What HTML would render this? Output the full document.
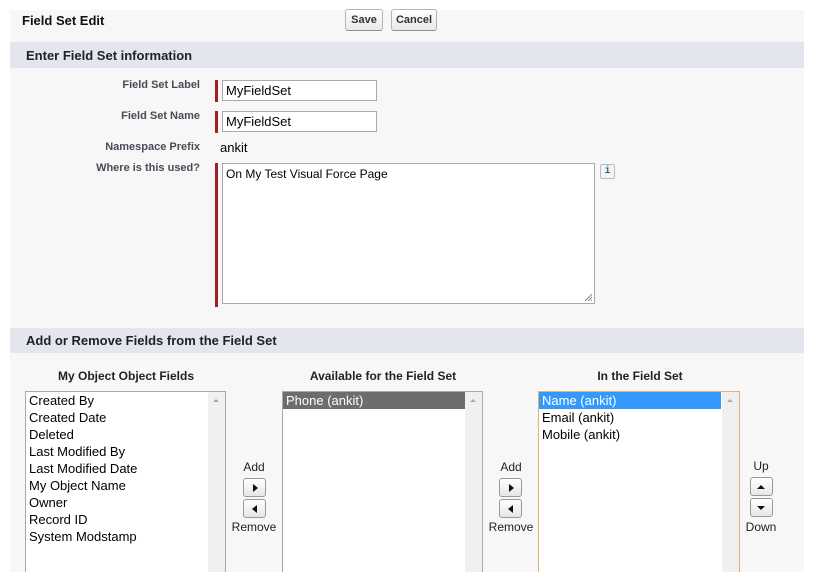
<!DOCTYPE html>
<html style="width:814px;height:572px;overflow:hidden"><head><style>
*{margin:0;padding:0;box-sizing:border-box}
body{width:814px;height:572px;background:#fff;font-family:"Liberation Sans",Arial,sans-serif;position:relative;overflow:hidden;color:#000}
.a{position:absolute}
.bg{left:10px;top:10px;width:794px;height:562px;background:#f7f7f7}
.hdr{left:10px;width:794px;height:25px;background:#e3e6ee;font-weight:bold;font-size:13px;color:#222;padding-left:16px;line-height:25px}
.btn{border:1px solid #b5b5b5;border-bottom-color:#8f8f8f;border-radius:3px;background:linear-gradient(#fff,#e8e8e8);font-size:11px;font-weight:bold;color:#333;text-align:center;line-height:20px;height:22px}
.lbl{font-size:11px;font-weight:bold;color:#4a4a56;text-align:right;width:190px;left:10px}
.red{background:#a31e22;width:3px;left:215px}
.inp{border:1px solid #aaa;background:#fff;font-size:13px;padding-left:3px;line-height:19px}
.ch{font-size:12px;font-weight:bold;color:#222;text-align:center;width:220px}
.list{border:1px solid #a9a9a9;border-bottom:0;background:#fff;height:181px;font-size:13px;line-height:17px}
.list .sb{position:absolute;right:0;top:0;width:17px;height:100%;background:#f0f0f0}
.list .sb:after{content:"";position:absolute;left:5px;top:7px;border:3px solid transparent;border-bottom:3px solid #aaa;border-top:0}
.list div.it{padding-left:3px;white-space:nowrap}
.sm{font-size:12px;color:#222;text-align:center;width:50px}
.ab{width:23px;height:19px;border:1px solid #999;border-radius:3px;background:linear-gradient(#fff,#e6e6e6)}
.ab svg{position:absolute;left:7px;top:4px}
</style></head><body>
<div class="a bg"></div>
<div class="a" style="left:22px;top:13px;font-size:13px;font-weight:bold;color:#111">Field Set Edit</div>
<div class="a btn" style="left:345px;top:9px;width:38px">Save</div>
<div class="a btn" style="left:391px;top:9px;width:46px">Cancel</div>
<div class="a" style="left:10px;top:42px;width:794px;height:1px;background:#dfe2ea"></div>
<div class="a hdr" style="top:43px">Enter Field Set information</div>

<div class="a lbl" style="top:79px">Field Set Label</div>
<div class="a red" style="top:80px;height:22px"></div>
<div class="a inp" style="left:222px;top:80px;width:155px;height:21px">MyFieldSet</div>
<div class="a lbl" style="top:110px">Field Set Name</div>
<div class="a red" style="top:111px;height:22px"></div>
<div class="a inp" style="left:222px;top:111px;width:155px;height:21px">MyFieldSet</div>
<div class="a lbl" style="top:141px">Namespace Prefix</div>
<div class="a" style="left:220px;top:140px;font-size:13px">ankit</div>
<div class="a lbl" style="top:162px">Where is this used?</div>
<div class="a red" style="top:163px;height:144px"></div>
<div class="a inp" style="left:222px;top:163px;width:373px;height:141px;font-size:12px;padding-top:2px;line-height:17px">On My Test Visual Force Page
<svg class="a" style="right:2px;bottom:2px" width="7" height="7"><path d="M7 0L0 7M7 3L3 7M7 6L6 7" stroke="#888" stroke-width="1"/></svg></div>
<div class="a" style="left:600px;top:164px;width:15px;height:15px;border:1px solid #bbb;border-radius:2px;background:#f2f4f6;font-size:10px;font-weight:bold;color:#2a6a8a;text-align:center;line-height:13px;font-family:'Liberation Mono',monospace">i</div>

<div class="a hdr" style="top:328px">Add or Remove Fields from the Field Set</div>

<div class="a ch" style="left:16px;top:369px">My Object Object Fields</div>
<div class="a ch" style="left:273px;top:369px">Available for the Field Set</div>
<div class="a ch" style="left:530px;top:369px">In the Field Set</div>

<div class="a list" style="left:25px;top:391px;width:201px"><div class="sb"></div>
<div class="it">Created By</div><div class="it">Created Date</div><div class="it">Deleted</div><div class="it">Last Modified By</div><div class="it">Last Modified Date</div><div class="it">My Object Name</div><div class="it">Owner</div><div class="it">Record ID</div><div class="it">System Modstamp</div></div>

<div class="a list" style="left:282px;top:391px;width:201px"><div class="sb"></div>
<div class="it" style="background:#6d6d6d;color:#fff;width:182px">Phone (ankit)</div></div>

<div class="a list" style="left:538px;top:391px;width:202px;border-color:#e0b46a"><div class="sb"></div>
<div class="it" style="background:#3399ff;color:#fff;width:182px">Name (ankit)</div><div class="it">Email (ankit)</div><div class="it">Mobile (ankit)</div></div>

<div class="a sm" style="left:229px;top:460px">Add</div>
<div class="a ab" style="left:243px;top:478px"><svg width="8" height="10"><path d="M2 1L7 5L2 9Z" fill="#111"/></svg></div>
<div class="a ab" style="left:243px;top:499px"><svg width="8" height="10"><path d="M6 1L1 5L6 9Z" fill="#111"/></svg></div>
<div class="a sm" style="left:229px;top:520px">Remove</div>

<div class="a sm" style="left:486px;top:460px">Add</div>
<div class="a ab" style="left:499px;top:478px"><svg width="8" height="10"><path d="M2 1L7 5L2 9Z" fill="#111"/></svg></div>
<div class="a ab" style="left:499px;top:499px"><svg width="8" height="10"><path d="M6 1L1 5L6 9Z" fill="#111"/></svg></div>
<div class="a sm" style="left:486px;top:520px">Remove</div>

<div class="a sm" style="left:736px;top:459px">Up</div>
<div class="a ab" style="left:750px;top:477px"><svg width="10" height="8" style="left:5px;top:5px"><path d="M1 6L5 2L9 6Z" fill="#111"/></svg></div>
<div class="a ab" style="left:750px;top:498px"><svg width="10" height="8" style="left:5px;top:5px"><path d="M1 2L5 6L9 2Z" fill="#111"/></svg></div>
<div class="a sm" style="left:736px;top:520px">Down</div>
</body></html>
